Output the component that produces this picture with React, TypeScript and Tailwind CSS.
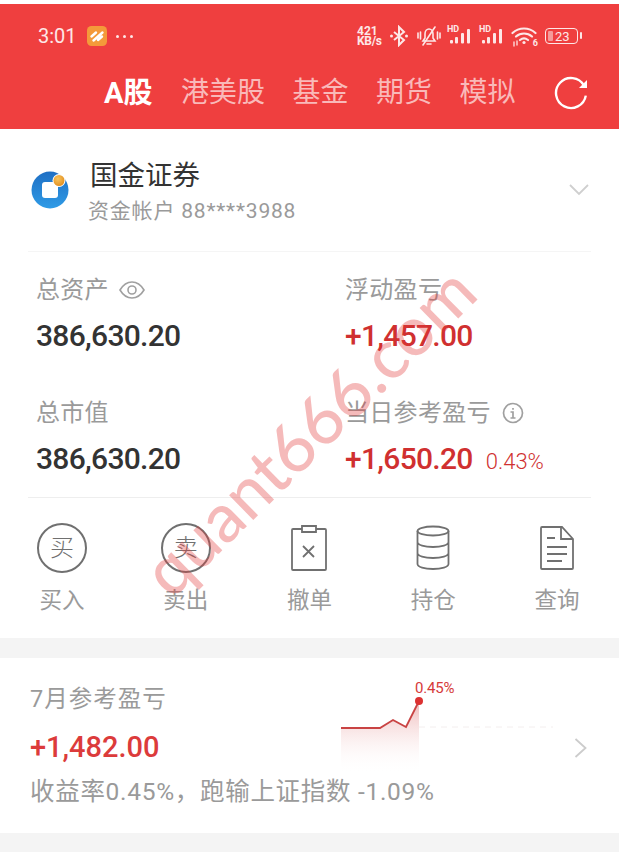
const cjk = "font-['Roboto','Noto_Sans_CJK_SC',sans-serif]";

function Signal() {
  return (
    <div className="relative w-[28px] h-[20px]">
      <span className="absolute left-0 top-[-1px] text-[9px] leading-[9px] font-bold text-[#fde7e7]">HD</span>
      <svg className="absolute inset-0" width="28" height="20" viewBox="0 0 28 20" fill="#fde7e7">
        <rect x="3" y="14" width="3" height="3.500" rx="1" />
        <rect x="8" y="11" width="3" height="6.500" rx="1" />
        <rect x="14" y="7" width="3" height="10.500" rx="1" />
        <rect x="20" y="3" width="3" height="14.500" rx="1" />
      </svg>
    </div>
  );
}

function StatusBar() {
  return (
    <div className="h-[64px] pl-[38px] pr-[41px] flex items-center justify-between">
      <div className="flex items-center">
        <span className="text-[20px] text-[#fde7e7] leading-none">3:01</span>
        <svg className="ml-[10px]" width="20" height="20" viewBox="0 0 20 20">
          <rect width="20" height="20" rx="4.500" fill="#f49a3a" />
          <path d="M4.500 10.500 9 6.500M6.500 14.500 15.500 6.500M11 14 15 10.500" stroke="#fff" strokeWidth="2.400" strokeLinecap="round" fill="none" />
        </svg>
        <div className="ml-[9px] flex gap-[4px]">
          <span className="w-[3px] h-[3px] rounded-full bg-[#fde7e7]" />
          <span className="w-[3px] h-[3px] rounded-full bg-[#fde7e7]" />
          <span className="w-[3px] h-[3px] rounded-full bg-[#fde7e7]" />
        </div>
      </div>
      <div className="flex items-center">
        <div className="w-[29px] text-[12px] leading-[10px] font-bold text-[#fde7e7]">
          <div>421</div>
          <div className="whitespace-nowrap tracking-[-0.3px]">KB/s</div>
        </div>
        <svg className="ml-[3px]" width="20" height="22" viewBox="0 0 20 22" fill="none" stroke="#fde7e7" strokeWidth="2">
          <path d="M5 7l10 8-5 5V2l5 5L5 15" />
          <circle cx="2.500" cy="11" r="1.500" fill="#fde7e7" stroke="none" />
          <circle cx="17.500" cy="11" r="1.500" fill="#fde7e7" stroke="none" />
        </svg>
        <svg className="ml-[7px]" width="26" height="22" viewBox="0 0 26 22" fill="none" stroke="#fde7e7" strokeWidth="1.600" strokeLinecap="round">
          <path d="M7 16h12l-2-3V9c0-3-2-5-4-5s-4 2-4 5v4z" />
          <path d="M11 19h4M19 2 7 20M2 8v5M4.500 7v7M21.500 7v7M24 8v5" />
        </svg>
        <div className="ml-[5px]"><Signal /></div>
        <div className="ml-[4px]"><Signal /></div>
        <div className="ml-[4px] relative w-[26px] h-[22px]">
          <svg width="26" height="22" viewBox="0 0 26 22" fill="none" stroke="#fde7e7" strokeWidth="2.200" strokeLinecap="round">
            <path d="M1.500 8C8 2 18 2 24.500 8M5 11.500c4.500-4 11.500-4 16 0M9 15c2.500-2 5.500-2 8 0" />
            <circle cx="13" cy="17.500" r="1.600" fill="#fde7e7" stroke="none" />
            <path d="M3 17v4M6 16v4" strokeWidth="1.300" />
          </svg>
          <span className="absolute right-[-1px] bottom-[-1px] text-[9px] leading-[9px] font-bold text-[#fde7e7]">6</span>
        </div>
        <div className="ml-[8px] relative w-[33px] h-[16px] border-[1.500px] border-[#fde7e7] rounded-[4px] flex items-center">
          <span className="ml-[2px] w-[5px] h-[10px] bg-[#f59a9a] rounded-[1px]" />
          <span className="ml-[2px] text-[13px] leading-none text-[#fde7e7]">23</span>
          <span className="absolute right-[-5px] top-[3px] w-[2px] h-[7px] bg-[#fde7e7] rounded-full" />
        </div>
      </div>
    </div>
  );
}

function TopBar() {
  const tabs = ["港美股", "基金", "期货", "模拟"];
  return (
    <div className="bg-[#ef3f3f] h-[125px]">
      <StatusBar />
      <div className="h-[50px] pl-[104px] pr-[31px] flex items-center">
        <span className="w-[51px] text-[29px] font-bold text-white leading-none">A股</span>
        <div className="ml-[26px] flex gap-[27.500px]">
          {tabs.map((t) => (
            <span key={t} className="text-[28px] text-[#f9b9b9] leading-none">{t}</span>
          ))}
        </div>
        <svg className="ml-auto" width="34" height="34" viewBox="0 0 34 34" fill="none" stroke="#fff" strokeWidth="2.400">
          <path d="M30 9.500A15 15 0 1 0 31.800 19.600" />
          <path d="M33 4v8h-8z" fill="#fff" stroke="none" />
        </svg>
      </div>
    </div>
  );
}

function Account() {
  return (
    <div className="h-[123px] mx-[28px] border-b border-[#f5f5f5] flex items-center">
      <svg className="ml-[3px] mb-[2px]" width="40" height="40" viewBox="0 0 40 40">
        <defs>
          <radialGradient id="ball" cx="0.4" cy="0.35" r="0.7">
            <stop offset="0" stopColor="#f9c45c" />
            <stop offset="1" stopColor="#e08d1f" />
          </radialGradient>
          <linearGradient id="disc" x1="0" y1="0" x2="0" y2="1">
            <stop offset="0" stopColor="#1f6fc4" />
            <stop offset="1" stopColor="#2f9be6" />
          </linearGradient>
        </defs>
        <circle cx="19" cy="21" r="18.500" fill="url(#disc)" />
        <rect x="11" y="13" width="16" height="16" rx="3" fill="#fff" />
        <circle cx="28" cy="11.500" r="6.500" fill="#fff" />
        <circle cx="28" cy="11.500" r="5.500" fill="url(#ball)" />
      </svg>
      <div className="ml-[19px] mt-[3px]">
        <div className="text-[27.500px] leading-[34px] text-[#333]">国金证券</div>
        <div className="mt-[4px] -ml-[2px] text-[21px] leading-[28px] text-[#9a9a9a] tracking-[0.8px]">资金帐户 88****3988</div>
      </div>
      <svg className="ml-auto mr-[2px]" width="20" height="12" viewBox="0 0 20 12" fill="none" stroke="#cfcfcf" strokeWidth="1.800">
        <path d="M1 1l9 9 9-9" />
      </svg>
    </div>
  );
}

function Stat({ label, value, red, icon, extra }: { label: string; value: string; red?: boolean; icon?: React.ReactNode; extra?: string }) {
  return (
    <div className="h-[123px]">
      <div className="flex items-center h-[34px] mt-[21px]">
        <span className="text-[24px] leading-none text-[#9a9a9a] tracking-[0.3px]">{label}</span>
        {icon}
      </div>
      <div className="flex items-baseline mt-[11px]">
        <span className={`text-[30px] leading-[36px] font-medium tracking-[-0.7px] ${red ? "text-[#d03030]" : "text-[#333]"}`}>{value}</span>
        {extra && <span className="ml-[13px] text-[22px] font-light text-[#d03030]">{extra}</span>}
      </div>
    </div>
  );
}

function Stats() {
  return (
    <div className="mx-[28px] pl-[8px] h-[246px] border-b border-[#eeeeee] grid grid-cols-[309px_1fr] content-start">
      <Stat
        label="总资产"
        value="386,630.20"
        icon={
          <svg className="ml-[10px]" width="26" height="20" viewBox="0 0 26 20" fill="none" stroke="#a0a0a0" strokeWidth="1.600">
            <path d="M1 10c3-5 7-8 12-8s9 3 12 8c-3 5-7 8-12 8S4 15 1 10z" />
            <circle cx="13" cy="10" r="4" />
          </svg>
        }
      />
      <Stat label="浮动盈亏" value="+1,457.00" red />
      <Stat label="总市值" value="386,630.20" />
      <Stat
        label="当日参考盈亏"
        value="+1,650.20"
        red
        extra="0.43%"
        icon={
          <svg className="ml-[11px]" width="22" height="22" viewBox="0 0 22 22" fill="none" stroke="#a0a0a0" strokeWidth="1.700">
            <circle cx="11" cy="11" r="9.500" />
            <path d="M8.500 10h2.500v6M8.500 16h5M11 6v1.800" />
          </svg>
        }
      />
    </div>
  );
}

function CircleIcon({ text }: { text: string }) {
  return (
    <div className="w-[50px] h-[50px] rounded-full border-2 border-[#707070] flex items-center justify-center text-[24px] font-light leading-none text-[#707070]">
      {text}
    </div>
  );
}

function Actions() {
  const stroke = "#707070";
  const items = [
    { label: "买入", icon: <CircleIcon text="买" /> },
    { label: "卖出", icon: <CircleIcon text="卖" /> },
    {
      label: "撤单",
      icon: (
        <svg width="36" height="46" viewBox="0 0 36 46" fill="none" stroke={stroke} strokeWidth="1.800">
          <path d="M11 4H2a1 1 0 0 0-1 1v39a1 1 0 0 0 1 1h32a1 1 0 0 0 1-1V5a1 1 0 0 0-1-1h-9" />
          <path d="M11 7V1h14v6zM12 21l11 11M23 21 12 32" />
        </svg>
      ),
    },
    {
      label: "持仓",
      icon: (
        <svg width="34" height="46" viewBox="0 0 34 46" fill="none" stroke={stroke} strokeWidth="1.800">
          <ellipse cx="17" cy="6" rx="15.500" ry="4.500" />
          <path d="M1.500 6v33c0 3 7 5 15.500 5s15.500-2 15.500-5V6M1.500 17c0 3 7 5 15.500 5s15.500-2 15.500-5M1.500 28c0 3 7 5 15.500 5s15.500-2 15.500-5" />
        </svg>
      ),
    },
    {
      label: "查询",
      icon: (
        <svg width="34" height="44" viewBox="0 0 34 44" fill="none" stroke={stroke} strokeWidth="1.800">
          <path d="M2 1h20l11 12v29a1 1 0 0 1-1 1H2a1 1 0 0 1-1-1V2a1 1 0 0 1 1-1z" />
          <path d="M21 1v12h12M7 12h8M7 21h20M7 28h20M7 35h15" />
        </svg>
      ),
    },
  ];
  return (
    <div className="h-[140px] grid grid-cols-5">
      {items.map((it) => (
        <div key={it.label} className="flex flex-col items-center">
          <div className="h-[50px] mt-[25px] flex items-center">{it.icon}</div>
          <span className="mt-[14px] text-[22.500px] leading-[26px] text-[#9a9a9a]">{it.label}</span>
        </div>
      ))}
    </div>
  );
}

function MiniChart() {
  return (
    <div className="absolute left-[335px] top-[20px] w-[225px] h-[100px]">
      <svg width="225" height="100" viewBox="0 0 225 100">
        <defs>
          <linearGradient id="fade" x1="0" y1="0" x2="0" y2="1">
            <stop offset="0" stopColor="#e9a0a0" stopOpacity="0.75" />
            <stop offset="1" stopColor="#ffffff" stopOpacity="0" />
          </linearGradient>
        </defs>
        <path d="M6 50H45L58 42 71 49 84 23V95H6z" fill="url(#fade)" />
        <path d="M84 49H218" stroke="#f3eeee" strokeWidth="1" strokeDasharray="6 5" />
        <path d="M6 50H45L58 42 71 49 84 23" fill="none" stroke="#c94343" strokeWidth="1.800" />
        <circle cx="84" cy="23" r="4" fill="#dc3232" />
      </svg>
      <span className="absolute left-[80px] top-[3px] text-[15px] leading-none text-[#d63a3a] tracking-[-0.2px]">0.45%</span>
    </div>
  );
}

function MonthCard() {
  return (
    <div className="relative h-[175px] pl-[30px] flex items-center">
      <MiniChart />
      <div className="relative flex-1">
        <div className="text-[23.500px] leading-[34px] text-[#9a9a9a] tracking-[1px]">7月参考盈亏</div>
        <div className="mt-[13px] text-[29px] leading-[36px] font-medium text-[#dc3b3b]">+1,482.00</div>
        <div className="mt-[9px] text-[24.500px] leading-[36px] text-[#9a9a9a] tracking-[0.7px] whitespace-nowrap">收益率0.45%，跑输上证指数 -1.09%</div>
      </div>
      <svg className="absolute left-[574px] top-[80px]" width="13" height="20" viewBox="0 0 13 20" fill="none" stroke="#cccccc" strokeWidth="1.800">
        <path d="M1.500 1l10 9-10 9" />
      </svg>
    </div>
  );
}

export default function App() {
  return (
    <div className={`relative w-[624px] h-[852px] overflow-hidden bg-white pt-[4px] ${cjk}`}>
      <div className="w-[619px]">
        <TopBar />
        <Account />
        <Stats />
        <Actions />
        <div className="h-[20px] bg-[#f4f4f4]" />
        <MonthCard />
        <div className="h-[19px] bg-[#f4f4f4]" />
      </div>
      {/* watermark */}
      <div className="absolute left-[308px] top-[430px] w-0 h-0 flex items-center justify-center pointer-events-none">
        <span className="shrink-0 -rotate-[44.5deg] text-[68px] font-medium leading-none whitespace-nowrap text-[#e23a3a]/35 font-['Lato',sans-serif]">quant666.com</span>
      </div>
    </div>
  );
}
